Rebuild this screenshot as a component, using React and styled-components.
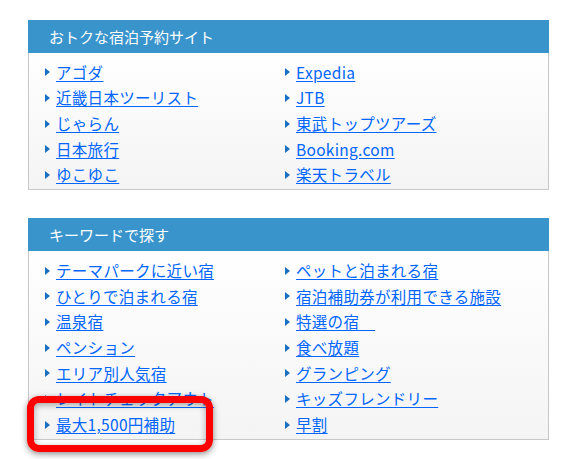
import React from 'react';
import styled, { createGlobalStyle } from 'styled-components';

const GlobalStyle = createGlobalStyle`
  body {
    margin: 0;
    background: #ffffff;
    font-family: "Noto Sans CJK JP", "Noto Sans", sans-serif;
  }
`;

const Page = styled.div`
  position: relative;
  width: 576px;
  height: 459px;
  padding: 20px 0 0 28px;
  box-sizing: border-box;
  display: flex;
  flex-direction: column;
  gap: 28px;
  overflow: hidden;
`;

const Panel = styled.section`
  width: 521px;
  box-sizing: border-box;
  border: 1px solid #c8c8c8;
  border-top: none;
`;

const Header = styled.h2`
  margin: 0 -1px;
  height: 33px;
  background: #3a94cc;
  color: #ffffff;
  font-size: 15px;
  font-weight: normal;
  line-height: 33px;
  padding-left: 21px;
`;

const Body = styled.ul`
  list-style: none;
  margin: 0;
  padding: 6px 0 2px 16px;
  display: grid;
  grid-template-columns: 240px 1fr;
  grid-auto-flow: column;
  grid-template-rows: repeat(${(p) => p.$rows}, 25.67px);
  background: linear-gradient(#ffffff, #f4f4f4);
`;

const Item = styled.li`
  display: flex;
  align-items: center;
  gap: 6px;
`;

const Arrow = styled.span`
  width: 0;
  height: 0;
  border-top: 4px solid transparent;
  border-bottom: 4px solid transparent;
  border-left: 5px solid #1a6fc0;
  margin-top: 1px;
`;

const Link = styled.a`
  color: #0066ff;
  font-size: 15.5px;
  text-decoration: underline;
  text-underline-offset: 2px;
  letter-spacing: 0.3px;
  white-space: nowrap;
`;

const Highlight = styled.div`
  position: absolute;
  left: 27px;
  top: 396px;
  width: 186px;
  height: 56px;
  box-sizing: border-box;
  border: 7px solid #ff0000;
  border-radius: 12px;
  box-shadow: 0 2px 6px rgba(0, 0, 0, 0.45), inset 0 2px 6px rgba(0, 0, 0, 0.35);
`;

const sites = [
  'アゴダ', '近畿日本ツーリスト', 'じゃらん', '日本旅行', 'ゆこゆこ',
  'Expedia', 'JTB', '東武トップツアーズ', 'Booking.com', '楽天トラベル',
];

const keywords = [
  'テーマパークに近い宿', 'ひとりで泊まれる宿', '温泉宿', 'ペンション', 'エリア別人気宿', 'レイトチェックアウト', '最大1,500円補助',
  'ペットと泊まれる宿', '宿泊補助券が利用できる施設', '特選の宿\u3000', '食べ放題', 'グランピング', 'キッズフレンドリー', '早割',
];

const LinkPanel = ({ title, items, rows }) => (
  <Panel>
    <Header>{title}</Header>
    <Body $rows={rows}>
      {items.map((t) => (
        <Item key={t}>
          <Arrow />
          <Link href="#">{t}</Link>
        </Item>
      ))}
    </Body>
  </Panel>
);

export default function App() {
  return (
    <Page>
      <GlobalStyle />
      <LinkPanel title="おトクな宿泊予約サイト" items={sites} rows={5} />
      <LinkPanel title="キーワードで探す" items={keywords} rows={7} />
      <Highlight />
    </Page>
  );
}
